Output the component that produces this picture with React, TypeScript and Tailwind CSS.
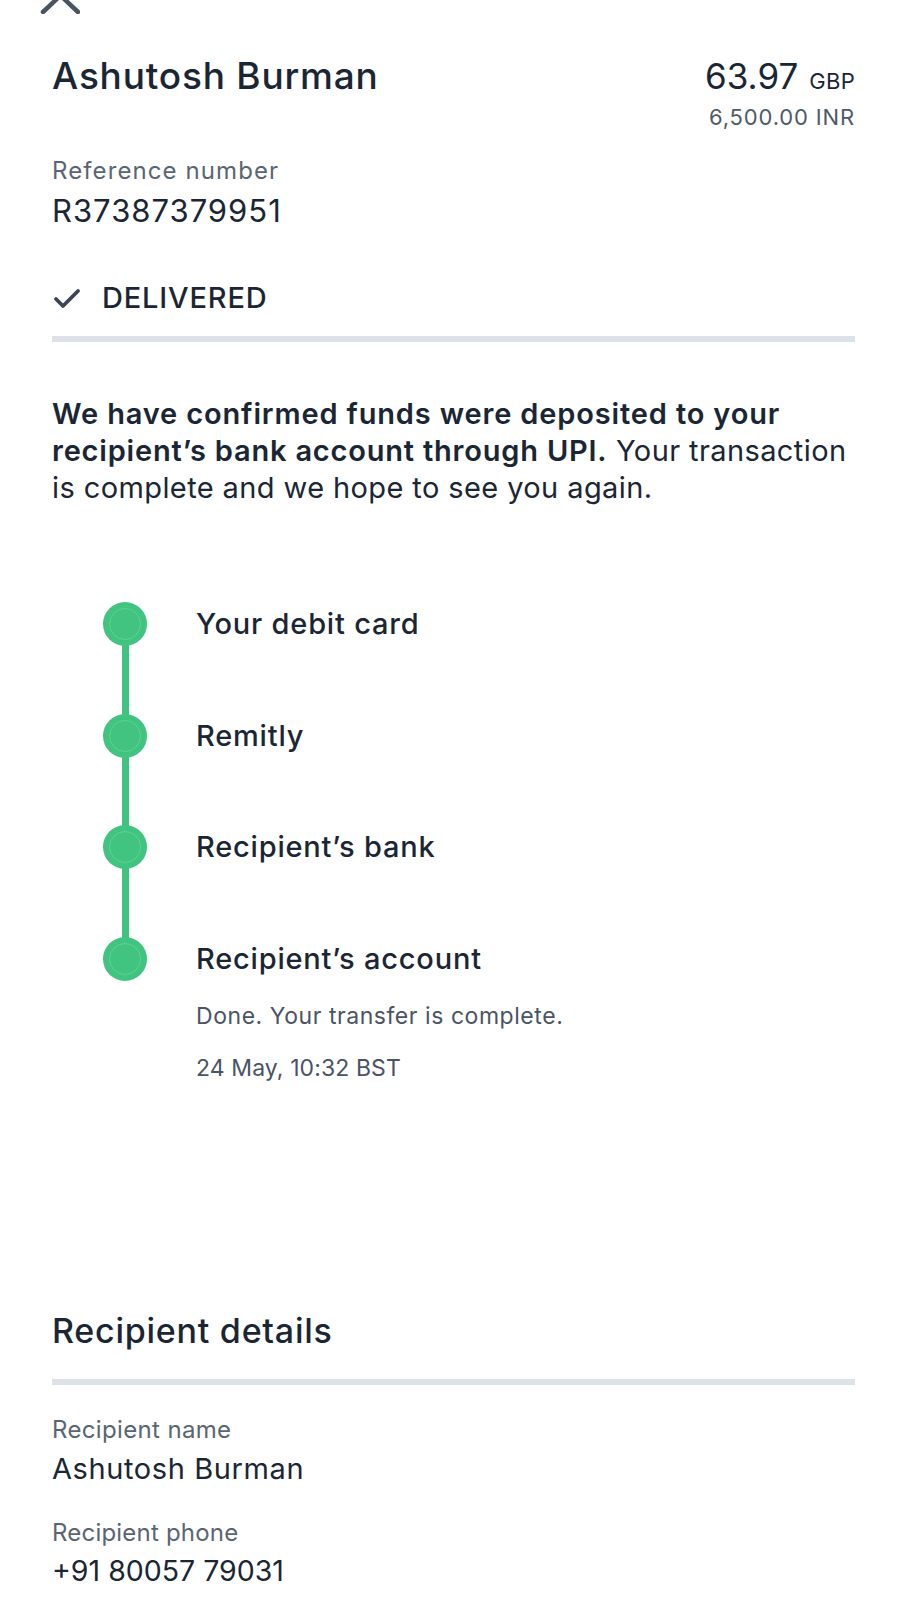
import React from "react";

const font = { fontFamily: "Inter, 'Noto Sans', sans-serif" };

function Step({ label, children, last }: { label: string; children?: React.ReactNode; last?: boolean }) {
  return (
    <div className={`flex items-start ${last ? "" : "h-[111.5px]"}`}>
      <div className="w-[44px] h-[44px] flex items-center justify-center shrink-0">
        <div className="w-[44px] h-[44px] rounded-full bg-[#41c47f] flex items-center justify-center">
          <div className="w-[32px] h-[32px] rounded-full border border-[#5fd094]" />
        </div>
      </div>
      <div className="ml-[49px] flex flex-col">
        <div className="text-[29px] leading-[44px] tracking-[0.8px] font-medium text-[#1b2635] whitespace-nowrap">{label}</div>
        {children}
      </div>
    </div>
  );
}

export default function App() {
  return (
    <div className="w-[906px] min-h-[1600px] bg-white overflow-hidden" style={font}>
      <div className="pl-[40px] h-[14px]">
        <svg width="40" height="14" viewBox="0 0 40 14" className="block overflow-hidden">
          <line x1="20.5" y1="-4.5" x2="3" y2="12" stroke="#4a5361" strokeWidth="4.5" strokeLinecap="round" />
          <line x1="20.5" y1="-4.5" x2="38" y2="12" stroke="#4a5361" strokeWidth="4.5" strokeLinecap="round" />
        </svg>
      </div>

      <div className="pl-[52px] pr-[51px] flex flex-col">
        {/* header */}
        <div className="mt-[39.5px] flex justify-between items-start">
          <div className="text-[37px] leading-[44px] tracking-[0.8px] font-medium text-[#1b2635] whitespace-nowrap">Ashutosh Burman</div>
          <div className="flex flex-col items-end">
            <div className="h-[44px] flex items-baseline text-[#1b2635] whitespace-nowrap">
              <span className="text-[35px] leading-[44px] font-normal">63.97</span>
              <span className="text-[22px] leading-[44px] ml-[11px] tracking-[0.3px]">GBP</span>
            </div>
            <div className="mt-[5.8px] text-[22px] leading-[28px] tracking-[0.85px] text-[#4f5a68] whitespace-nowrap">6,500.00 INR</div>
          </div>
        </div>

        <div className="mt-[26px] text-[24px] leading-[28px] tracking-[1.1px] text-[#5a6573]">Reference number</div>
        <div className="mt-[7.8px] text-[31px] leading-[36px] tracking-[1px] text-[#1b2635]">R37387379951</div>

        <div className="mt-[50.8px] flex items-center h-[36px]">
          <svg width="30" height="24" viewBox="0 0 30 24" className="block">
            <path d="M4 13 L11 20 L26 5" fill="none" stroke="#3b4554" strokeWidth="3.8" strokeLinecap="round" strokeLinejoin="round" />
          </svg>
          <div className="ml-[20px] text-[29px] leading-[36px] tracking-[0.85px] font-medium text-[#1b2635]">DELIVERED</div>
        </div>

        <div className="mt-[20px] h-[6.5px] bg-[#dde2e9]" />

        <div className="mt-[54px] text-[29px] leading-[36.7px] tracking-[0.4px] text-[#1b2635] whitespace-nowrap">
          <span className="font-semibold tracking-[0.85px]">We have confirmed funds were deposited to your</span>
          <br />
          <span className="font-semibold tracking-[0.8px]">recipient’s bank account through UPI.</span> Your transaction
          <br />
          is complete and we hope to see you again.
        </div>

        {/* timeline */}
        <div className="mt-[95.75px] ml-[51px] relative">
          <div className="absolute left-[18.5px] top-[22px] h-[334px] w-[7px] bg-[#41c47f]" />
          <div className="relative flex flex-col">
            <Step label="Your debit card" />
            <Step label="Remitly" />
            <Step label="Recipient’s bank" />
            <Step label="Recipient’s account" last>
              <div className="mt-[20px] text-[23px] leading-[30px] tracking-[0.55px] text-[#4a5464] whitespace-nowrap">Done. Your transfer is complete.</div>
              <div className="mt-[22px] text-[23px] leading-[30px] tracking-[0.1px] text-[#4a5464] whitespace-nowrap">24 May, 10:32 BST</div>
            </Step>
          </div>
        </div>

        <div className="mt-[226.5px] text-[34px] leading-[44px] tracking-[0.75px] font-medium text-[#1b2635]">Recipient details</div>
        <div className="mt-[25.5px] h-[6px] bg-[#dde2e9]" />

        <div className="mt-[31px] text-[24px] leading-[28px] tracking-[0.35px] text-[#5a6573]">Recipient name</div>
        <div className="mt-[7px] text-[29px] leading-[36px] tracking-[0.6px] text-[#1b2635]">Ashutosh Burman</div>
        <div className="mt-[32px] text-[24px] leading-[28px] tracking-[0.2px] text-[#5a6573]">Recipient phone</div>
        <div className="mt-[6.7px] text-[28.5px] leading-[36px] tracking-[0px] text-[#1b2635]">+91 80057 79031</div>
      </div>
    </div>
  );
}
